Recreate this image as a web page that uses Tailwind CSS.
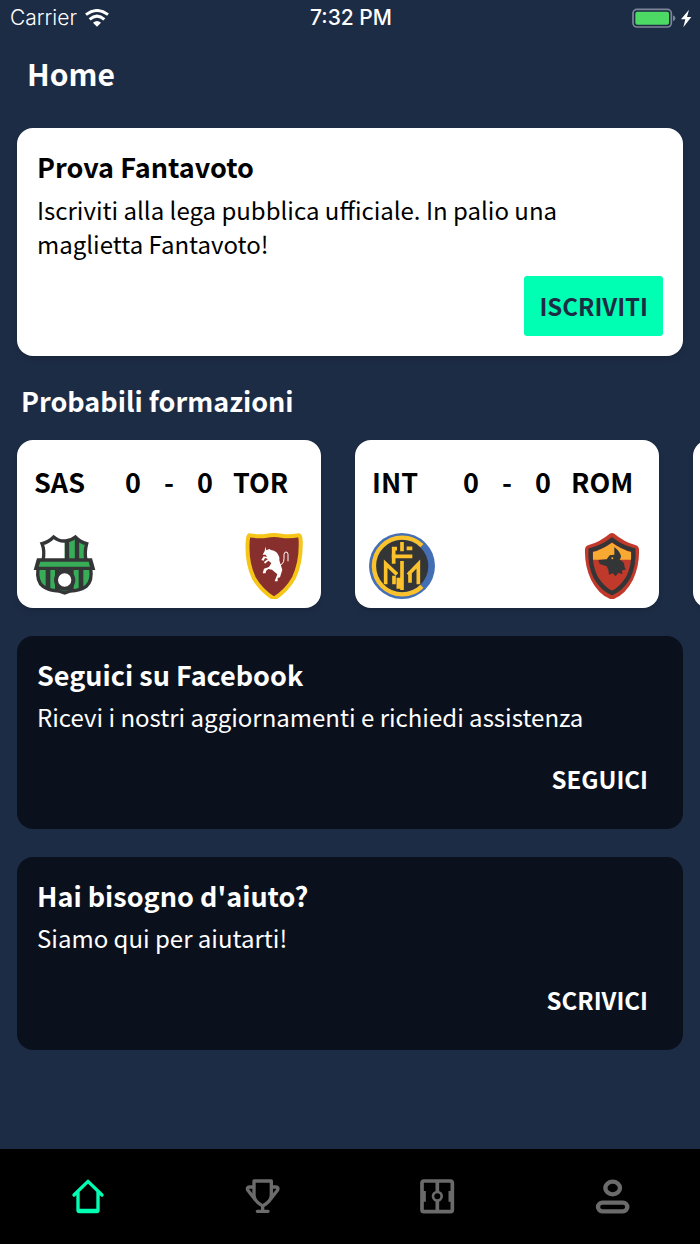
<!DOCTYPE html>
<html lang="it">
<head>
    <meta charset="UTF-8">
    <meta name="viewport" content="width=device-width, initial-scale=1.0">
    <title>Fantavoto - Home</title>
    <script src="https://cdn.jsdelivr.net/npm/@tailwindcss/browser@4"></script>
</head>
<body class="bg-[#1d2c45] text-white font-['Noto_Sans_CJK_JP',sans-serif]">
    <div class="min-h-screen flex flex-col overflow-hidden">

        <!-- Status bar -->
        <div class="grid grid-cols-[1fr_auto_1fr] items-center h-9 pl-[10px] pr-2 text-[21px] leading-6 font-['Inter',sans-serif]">
            <div class="flex items-center gap-2">
                <span class="font-light">Carrier</span>
                <svg class="w-6 h-[18px]" viewBox="0 0 72 54" fill="none" stroke="#fff" stroke-width="9">
                    <path d="M3 17Q36-8 69 17"></path>
                    <path d="M14 31Q36 12 58 31"></path>
                    <path d="M24 41Q36 31 48 41L36 53Z" fill="#fff" stroke="none"></path>
                </svg>
            </div>
            <span class="text-center font-medium">7:32 PM</span>
            <svg class="w-[60px] h-5 justify-self-end" viewBox="0 0 180 60">
                <rect x="3" y="4" width="115" height="53" rx="12" fill="none" stroke="#7d8697" stroke-width="5"></rect>
                <rect x="10" y="11" width="101" height="39" rx="6" fill="#4cd964"></rect>
                <path d="M123 22Q130 25 130 31T123 40Z" fill="#7d8697"></path>
                <path d="M171 5L147 34H160L154 58L178 27H165Z" fill="#fff"></path>
            </svg>
        </div>

        <main class="flex-1 px-[17px]">
            <h1 class="px-[10px] pt-[18px] text-[30px] leading-[38px] font-bold">Home</h1>

            <section class="mt-9 p-5 rounded-2xl bg-white text-black shadow-md">
                <h2 class="text-[27px] leading-[38px] font-bold">Prova Fantavoto</h2>
                <p class="mt-[7px] text-[24px] leading-[34px]">Iscriviti alla lega pubblica ufficiale. In palio una maglietta Fantavoto!</p>
                <div class="mt-[15px] flex justify-end">
                    <button type="button" class="h-[60px] px-[15px] rounded-[3px] bg-[#00ffb2] text-[#1d2c45] text-[24px] font-bold">ISCRIVITI</button>
                </div>
            </section>

            <h2 class="mt-[26px] px-1 text-[27px] leading-[38px] font-bold">Probabili formazioni</h2>
            <div class="mt-5 flex gap-[34px]">
                <article class="w-[304px] h-[168px] shrink-0 pt-[23px] rounded-2xl bg-white text-black shadow-md">
                    <div class="grid grid-cols-[81px_36px_36px_36px_1fr] pl-[17px] text-[27px] leading-[38px] font-bold">
                        <span>SAS</span>
                        <span class="text-center">0</span>
                        <span class="text-center">-</span>
                        <span class="text-center">0</span>
                        <span class="pl-[10px]">TOR</span>
                    </div>
                    <div class="mt-8 px-[14px] flex justify-between">
                        <svg class="size-[66px]" viewBox="33 39 198 198">
                            <path d="M66 71Q85 67 101 51Q116 64 134 63Q150 64 166 51Q181 67 200 71Q193 95 198 122H69Q75 92 66 71Z" fill="#fff"></path>
                            <path d="M134 63Q150 64 166 51Q181 67 200 71Q193 95 198 122H134Z" fill="#37ad57"></path>
                            <path d="M141 60V122M171 56V122" stroke="#343536" stroke-width="13"></path>
                            <path d="M66 71Q85 67 101 51Q116 64 134 63Q150 64 166 51Q181 67 200 71Q193 95 198 122H69Q75 92 66 71Z" fill="none" stroke="#343536" stroke-width="10"></path>
                            <path d="M54 145Q49 185 70 200Q90 213 116 213L134 219L151 213Q180 212 199 199Q218 183 212 145Z" fill="#37ad57" stroke="#343536" stroke-width="10"></path>
                            <path d="M84 145V205M112 145V213M154 145V213M183 145V205" stroke="#343536" stroke-width="14"></path>
                            <circle cx="134" cy="180" r="26" fill="#fff" stroke="#343536" stroke-width="12"></circle>
                            <path d="M51 115H216L226 150H41Z" fill="#343536"></path>
                            <path d="M61 125H206L210 140H56Z" fill="#37ad57"></path>
                        </svg>
                        <svg class="size-[66px]" viewBox="33 39 198 198">
                            <path d="M58 46Q90 51 110 47Q132 43 154 47Q176 51 206 46Q212 46 212 65Q214 125 192 173Q171 212 132 236Q93 212 71 173Q49 125 53 65Q54 46 58 46Z" fill="#872f2c" stroke="#f5c518" stroke-width="12"></path>
                            <path d="M106 80L109 91L118 87L123 90Q143 93 148 112Q147 120 150 128L157 149L150 172L143 174V184H134L142 163L126 149L115 147L108 153L107 160H98L102 146L117 141L124 129L115 122L105 131L102 126L114 117L105 114L101 122L94 120L101 109L111 111L107 104H98L104 93Z" fill="#fff"></path>
                            <path d="M148 137L157 131Q162 126 162 116V103Q163 96 168 96Q174 96 174 103V124" fill="none" stroke="#fff" stroke-width="3"></path>
                        </svg>
                    </div>
                </article>

                <article class="w-[304px] h-[168px] shrink-0 pt-[23px] rounded-2xl bg-white text-black shadow-md">
                    <div class="grid grid-cols-[81px_36px_36px_36px_1fr] pl-[17px] text-[27px] leading-[38px] font-bold">
                        <span>INT</span>
                        <span class="text-center">0</span>
                        <span class="text-center">-</span>
                        <span class="text-center">0</span>
                        <span class="pl-[10px]">ROM</span>
                    </div>
                    <div class="mt-8 px-[14px] flex justify-between">
                        <svg class="size-[66px]" viewBox="36 39 198 198">
                            <circle cx="135" cy="138" r="99" fill="#446fb5"></circle>
                            <circle cx="135" cy="138" r="79" fill="#343536"></circle>
                            <path d="M195 77A85 85 0 1 0 195 199" fill="none" stroke="#fbc22b" stroke-width="13"></path>
                            <g fill="none" stroke="#fbc22b" stroke-width="11">
                                <path d="M120 86H110V131M104 109H166M135 66V94M149 85H166"></path>
                                <path d="M86 193V131L120 163M111 167L111 193M124 173V206M135 123V210M153 164L184 132V193M159 154V188"></path>
                            </g>
                        </svg>
                        <svg class="size-[66px]" viewBox="36 39 198 198">
                            <path d="M128 41Q135 37 142 41Q170 65 207 76Q215 78 216 87Q218 137 198 179Q176 222 142 236Q135 240 128 236Q94 222 72 179Q52 137 54 87Q55 78 63 76Q100 65 128 41Z" fill="#c0392b"></path>
                            <path d="M135 59Q166 83 199 90Q202 135 184 172Q163 207 135 219Q107 207 86 172Q68 135 71 90Q104 83 135 59Z" fill="#c0392b" stroke="#343536" stroke-width="13"></path>
                            <path d="M135 68Q163 88 192 96V119H78V96Q107 88 135 68Z" fill="#f8a932"></path>
                            <path d="M142 81Q163 98 162 112L158 119Q174 126 172 138L176 149L165 151L166 163L154 158L146 169L137 160L126 164L124 149L119 139L98 132L94 120L119 118L128 106L142 104Z" fill="#343536"></path>
                            <circle cx="136" cy="115" r="3" fill="#f8a932"></circle>
                        </svg>
                    </div>
                </article>

                <article class="w-[304px] h-[168px] shrink-0 rounded-2xl bg-white shadow-md"></article>
            </div>

            <section class="mt-7 p-5 rounded-2xl bg-[#0b111c]">
                <h2 class="text-[27px] leading-[38px] font-bold">Seguici su Facebook</h2>
                <p class="mt-[6px] text-[24px] leading-[34px]">Ricevi i nostri aggiornamenti e richiedi assistenza</p>
                <div class="mt-[15px] flex justify-end">
                    <button type="button" class="h-[60px] px-[15px] text-[24px] font-bold">SEGUICI</button>
                </div>
            </section>

            <section class="mt-7 mb-7 p-5 rounded-2xl bg-[#0b111c]">
                <h2 class="text-[27px] leading-[38px] font-bold">Hai bisogno d'aiuto?</h2>
                <p class="mt-[6px] text-[24px] leading-[34px]">Siamo qui per aiutarti!</p>
                <div class="mt-[15px] flex justify-end">
                    <button type="button" class="h-[60px] px-[15px] text-[24px] font-bold">SCRIVICI</button>
                </div>
            </section>
        </main>

        <!-- Tab bar -->
        <nav class="grid grid-cols-4 h-[95px] pb-[2px] bg-black text-[#6b6b6b]">
            <a href="#home" aria-label="Home" class="flex items-center justify-center text-[#00ffb2]">
                <svg class="size-9" viewBox="0 0 108 108" fill="none" stroke="currentColor" stroke-width="10" stroke-linecap="round" stroke-linejoin="round">
                    <path d="M12 51L54 10L96 51M24 42V97Q24 101 28 101H80Q84 101 84 97V42M27 97H81"></path>
                </svg>
            </a>
            <a href="#coppe" aria-label="Coppe" class="flex items-center justify-center">
                <svg class="size-9" viewBox="0 0 108 108" fill="none" stroke="currentColor" stroke-width="10" stroke-linecap="round" stroke-linejoin="round">
                    <path d="M27 9H79V52Q79 70 53 84Q27 70 27 52Z"></path>
                    <path d="M26 27H13Q5 27 8 36L29 63M80 27H93Q101 27 98 36L77 63M53 84V98M37 100H69"></path>
                </svg>
            </a>
            <a href="#campo" aria-label="Campo" class="flex items-center justify-center">
                <svg class="size-9" viewBox="0 0 108 108" fill="none" stroke="currentColor" stroke-width="11">
                    <rect x="6" y="9" width="91" height="92" rx="6"></rect>
                    <path d="M52 9V41M52 69V101M12 39V71M91 39V71"></path>
                    <circle cx="52" cy="55" r="13" stroke-width="8"></circle>
                </svg>
            </a>
            <a href="#profilo" aria-label="Profilo" class="flex items-center justify-center">
                <svg class="size-9" viewBox="0 0 108 108" fill="none" stroke="currentColor" stroke-width="13">
                    <ellipse cx="53" cy="30" rx="22" ry="19"></ellipse>
                    <rect x="9" y="74" width="88" height="26" rx="13"></rect>
                </svg>
            </a>
        </nav>
    </div>
</body>
</html>
